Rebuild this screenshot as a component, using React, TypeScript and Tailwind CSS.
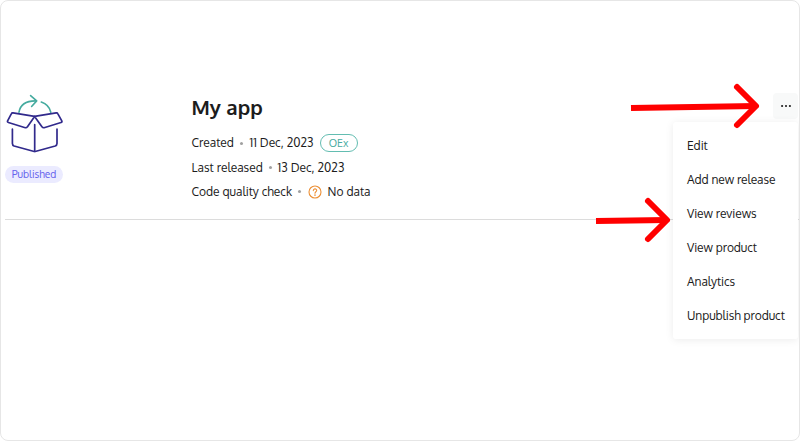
import React from 'react';

function BoxIcon() {
  return (
    <svg width="60" height="62" viewBox="5 93 60 62" fill="none" strokeLinecap="round" strokeLinejoin="round" className="block">
      <g stroke="#45ab9f" strokeWidth="1.6">
        <path d="M19 112.2C20.2 105.2 26 100.7 36 100.9" />
        <path d="M30.6 95.6L36.7 100.9L31.6 106.5" />
        <path d="M41.3 102.1C46 103.7 49.6 107.2 50.8 112.2" />
      </g>
      <g stroke="#312a8c" strokeWidth="1.7">
        <path d="M34.6 116.4L13 112.9Q11.8 112.7 11.3 113.8L7.6 120.9Q7.1 122.1 8.4 122.5L25.3 127.7Q26.6 128 27.3 126.9Z" />
        <path d="M34.6 116.4L56.2 112.9Q57.4 112.7 57.9 113.8L61.8 120.9Q62.4 122.1 61 122.5L44.1 127.7Q42.8 128 42.1 126.9Z" />
        <path d="M34.7 124.7V151.3" />
        <path d="M12.4 129.2V143.5Q12.4 145.3 14.1 146L33.3 151.3Q34.7 151.7 36.1 151.3L55.2 146Q57 145.3 57 143.5V129.2" />
      </g>
    </svg>
  );
}

function Dot() {
  return <span className="size-[3px] shrink-0 rounded-full bg-[#a0a0a0]" />;
}

const menuItems = ['Edit', 'Add new release', 'View reviews', 'View product', 'Analytics', 'Unpublish product'];

export default function App() {
  return (
    <div className="relative h-[441px] w-[800px] overflow-hidden rounded-[8px] border border-[#e6e6e6] bg-white font-['Oxygen','Noto_Sans',sans-serif] text-[12px] text-[#1c1c1c]">
      <header className="ml-1 flex h-[219px] border-b border-[#dcdcdc] pt-[92px]">
        <div className="flex w-[186.5px] flex-col items-start">
          <BoxIcon />
          <span className="mt-[11px] flex h-[17px] w-[58px] items-center justify-center rounded-full bg-[#ebebff] text-[10.2px] text-[#6360ec]">
            Published
          </span>
        </div>
        <div className="flex-1 whitespace-nowrap">
          <h1 className="h-[28px] text-[20.4px] leading-[28px] font-bold">My app</h1>
          <div className="mt-[10px] flex h-[24px] items-center">
            <span className="w-[42px]">Created</span>
            <span className="flex w-[16px] justify-center"><Dot /></span>
            <span className="w-[70px]">11 Dec, 2023</span>
            <span className="flex h-[18px] w-[38px] items-center justify-center rounded-full border border-[#63bdb1] text-[10.5px] text-[#48ab9f]">OEx</span>
          </div>
          <div className="flex h-[25px] items-center">
            <span className="w-[71px]">Last released</span>
            <span className="flex w-[15px] justify-center"><Dot /></span>
            <span>13 Dec, 2023</span>
          </div>
          <div className="flex h-[23px] items-center">
            <span className="w-[100px] tracking-[-0.03px]">Code quality check</span>
            <span className="flex w-[16px] justify-center"><Dot /></span>
            <svg width="14" height="14" viewBox="0 0 14 14" fill="none" stroke="#ec8f35" strokeWidth="1.1" strokeLinecap="round">
              <circle cx="7" cy="7" r="6" />
              <path d="M5.3 5.6C5.3 3.3 8.8 3.4 8.7 5.5C8.6 6.7 7 6.8 7 8.2" />
              <circle cx="7" cy="10.1" r="0.3" />
            </svg>
            <span className="ml-[6px]">No data</span>
          </div>
        </div>
        <button className="mr-[1px] flex h-[26px] w-[25px] items-center justify-center rounded-[4px] bg-[#f8f9f9]">
          <svg width="12" height="4" viewBox="0 0 12 4" fill="#222">
            <circle cx="2.1" cy="2" r="1.1" />
            <circle cx="6" cy="2" r="1.1" />
            <circle cx="9.9" cy="2" r="1.1" />
          </svg>
        </button>
      </header>

      <nav className="absolute top-[121px] left-[672px] h-[217px] w-[125px] rounded-[3px] bg-white pt-[7px] pl-[14px] shadow-[0_1px_8px_rgba(0,0,0,0.08)]">
        {menuItems.map((label) => (
          <div key={label} className="flex h-[34px] items-center tracking-[-0.08px] whitespace-nowrap">
            {label}
          </div>
        ))}
      </nav>

      <svg className="absolute -top-px -left-px" width="800" height="441" fill="none" stroke="#ff0000" strokeWidth="6">
        <path d="M631 108L756 106" />
        <path d="M737 87L756 106L737 125" strokeLinecap="round" strokeLinejoin="round" />
        <path d="M596 221L667 220" />
        <path d="M648 201L667 220L648 239" strokeLinecap="round" strokeLinejoin="round" />
      </svg>
    </div>
  );
}
